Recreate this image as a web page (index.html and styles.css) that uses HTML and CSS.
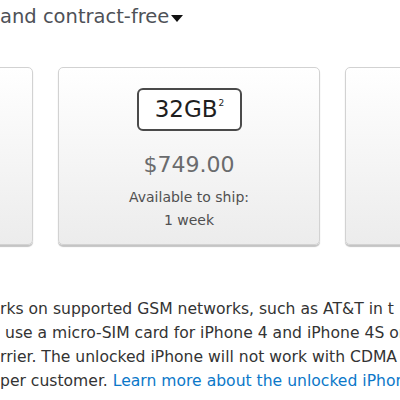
FILE: index.html
```html
<!DOCTYPE html>
<html>
<head>
<meta charset="utf-8">
<link rel="stylesheet" href="styles.css">
</head>
<body>
<div class="page">
  <h2 class="heading">and contract-free<span class="caret"></span></h2>
  <div class="cards">
    <div class="card"></div>
    <div class="card">
      <div class="capacity">32GB<sup>2</sup></div>
      <div class="price">$749.00</div>
      <div class="ship">Available to ship:<br>1 week</div>
    </div>
    <div class="card"></div>
  </div>
  <div class="note">
    <div class="line l1">rks on supported GSM networks, such as AT&amp;T in t</div>
    <div class="line l2">use a micro-SIM card for iPhone 4 and iPhone 4S or</div>
    <div class="line l3">rrier. The unlocked iPhone will not work with CDMA</div>
    <div class="line l4">per customer. <a href="#" class="link">Learn more about the unlocked iPhone</a></div>
  </div>
</div>
</body>
</html>
```
FILE: styles.css
```css
html, body {
  margin: 0;
  padding: 0;
  background: #fff;
}
.page {
  width: 400px;
  height: 400px;
  overflow: hidden;
  font-family: "DejaVu Sans", Verdana, sans-serif;
}
.heading {
  margin: 0;
  padding-top: 4px;
  font-size: 19.5px;
  font-weight: normal;
  line-height: 26px;
  color: #4e5157;
  white-space: nowrap;
  display: flex;
  align-items: center;
}
.caret {
  display: inline-block;
  width: 0;
  height: 0;
  margin-left: 2px;
  margin-top: 3px;
  border-left: 6px solid transparent;
  border-right: 6px solid transparent;
  border-top: 7px solid #111;
}
.cards {
  display: flex;
  gap: 25px;
  margin-top: 37px;
  margin-left: -229px;
}
.card {
  flex: 0 0 auto;
  width: 260px;
  height: 176px;
  border: 1px solid #d2d2d2;
  border-radius: 5px;
  background: linear-gradient(#ffffff, #ececec);
  box-shadow: 0 2px 1px #c4c4c4;
  display: flex;
  flex-direction: column;
  align-items: center;
}
.capacity {
  margin-top: 20px;
  width: 101px;
  height: 39px;
  border: 2px solid #4a4a4a;
  border-radius: 6px;
  background: #fff;
  font-size: 23px;
  line-height: 39px;
  color: #1e1e1e;
  text-align: center;
  box-sizing: content-box;
}
.capacity sup {
  font-size: 9px;
  line-height: 0;
  vertical-align: 0;
  position: relative;
  top: -11px;
  left: 1px;
}
.price {
  margin-top: 21px;
  font-size: 22px;
  line-height: 26px;
  color: #6a6b6d;
}
.ship {
  margin-top: 8px;
  font-size: 14px;
  line-height: 23px;
  color: #505050;
  text-align: center;
}
.note {
  margin-top: 52px;
  font-size: 15.6px;
  line-height: 24px;
  color: #333;
}
.line {
  white-space: nowrap;
}
.l2 {
  padding-left: 5px;
}
.link {
  color: #0b78c9;
  text-decoration: none;
}
```
